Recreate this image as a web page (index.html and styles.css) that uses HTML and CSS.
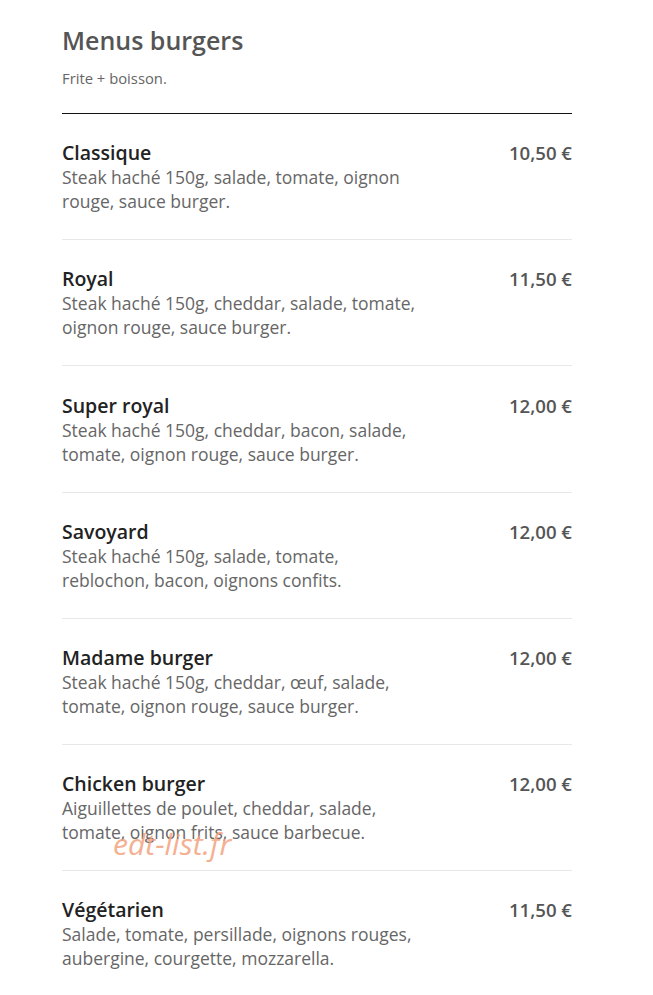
FILE: index.html
```html
<!DOCTYPE html>
<html lang="fr">
  <head>
    <meta charset="UTF-8" />
    <meta name="viewport" content="width=device-width, initial-scale=1.0" />
    <title>Menus burgers</title>
    <link rel="stylesheet" href="styles.css">
  </head>
  <body>
    <div class="menu">
      <header class="menu-header">
        <h1>Menus burgers</h1>
        <p class="subtitle">Frite + boisson.</p>
      </header>

      <ul class="items">
        <li class="item">
          <div class="item-info">
            <h2>Classique</h2>
            <p>Steak haché 150g, salade, tomate, oignon rouge, sauce burger.</p>
          </div>
          <span class="price">10,50 €</span>
        </li>
        <li class="item">
          <div class="item-info">
            <h2>Royal</h2>
            <p>Steak haché 150g, cheddar, salade, tomate, oignon rouge, sauce burger.</p>
          </div>
          <span class="price">11,50 €</span>
        </li>
        <li class="item">
          <div class="item-info">
            <h2>Super royal</h2>
            <p>Steak haché 150g, cheddar, bacon, salade, tomate, oignon rouge, sauce burger.</p>
          </div>
          <span class="price">12,00 €</span>
        </li>
        <li class="item">
          <div class="item-info">
            <h2>Savoyard</h2>
            <p>Steak haché 150g, salade, tomate, reblochon, bacon, oignons confits.</p>
          </div>
          <span class="price">12,00 €</span>
        </li>
        <li class="item">
          <div class="item-info">
            <h2>Madame burger</h2>
            <p>Steak haché 150g, cheddar, œuf, salade, tomate, oignon rouge, sauce burger.</p>
          </div>
          <span class="price">12,00 €</span>
        </li>
        <li class="item watermarked">
          <div class="item-info">
            <h2>Chicken burger</h2>
            <p>Aiguillettes de poulet, cheddar, salade, tomate, oignon frits, sauce barbecue.</p>
          </div>
          <span class="price">12,00 €</span>
          <span class="watermark">edt-list.fr</span>
        </li>
        <li class="item">
          <div class="item-info">
            <h2>Végétarien</h2>
            <p>Salade, tomate, persillade, oignons rouges, aubergine, courgette, mozzarella.</p>
          </div>
          <span class="price">11,50 €</span>
        </li>
      </ul>
    </div>
  </body>
</html>
```

FILE: styles.css
```css
body {
  font-family: "Open Sans", "Liberation Sans", sans-serif;
  margin: 0;
  padding: 0;
  background-color: #ffffff;
}
.menu {
  width: 510px;
  margin-left: 62px;
  padding-top: 24px;
}
.menu-header {
  border-bottom: 1px solid #111;
  padding-bottom: 25px;
}
.menu-header h1 {
  margin: 0;
  font-size: 25px;
  font-weight: 600;
  line-height: 32px;
  color: #555;
}
.subtitle {
  margin: 12px 0 0;
  font-size: 14.8px;
  line-height: 20px;
  color: #666;
}
.items {
  list-style-type: none;
  margin: 0;
  padding: 0;
}
.item {
  display: flex;
  justify-content: space-between;
  align-items: flex-start;
  padding: 27.2px 0 26px;
  border-bottom: 1px solid #e8e8e8;
}
.item:last-child {
  border-bottom: none;
}
.item-info {
  width: 362px;
}
.item-info h2 {
  margin: 0;
  font-size: 19.5px;
  font-weight: 600;
  line-height: 24px;
  color: #222;
}
.item-info p {
  margin: 0;
  font-size: 17.5px;
  line-height: 24px;
  color: #666;
}
.price {
  font-size: 18.6px;
  font-weight: 600;
  line-height: 24px;
  color: #555;
}
.watermarked {
  position: relative;
}
.watermark {
  position: absolute;
  left: 51px;
  top: 78px;
  font-size: 30px;
  font-style: italic;
  color: #f4a27e;
  opacity: 0.85;
}
```
